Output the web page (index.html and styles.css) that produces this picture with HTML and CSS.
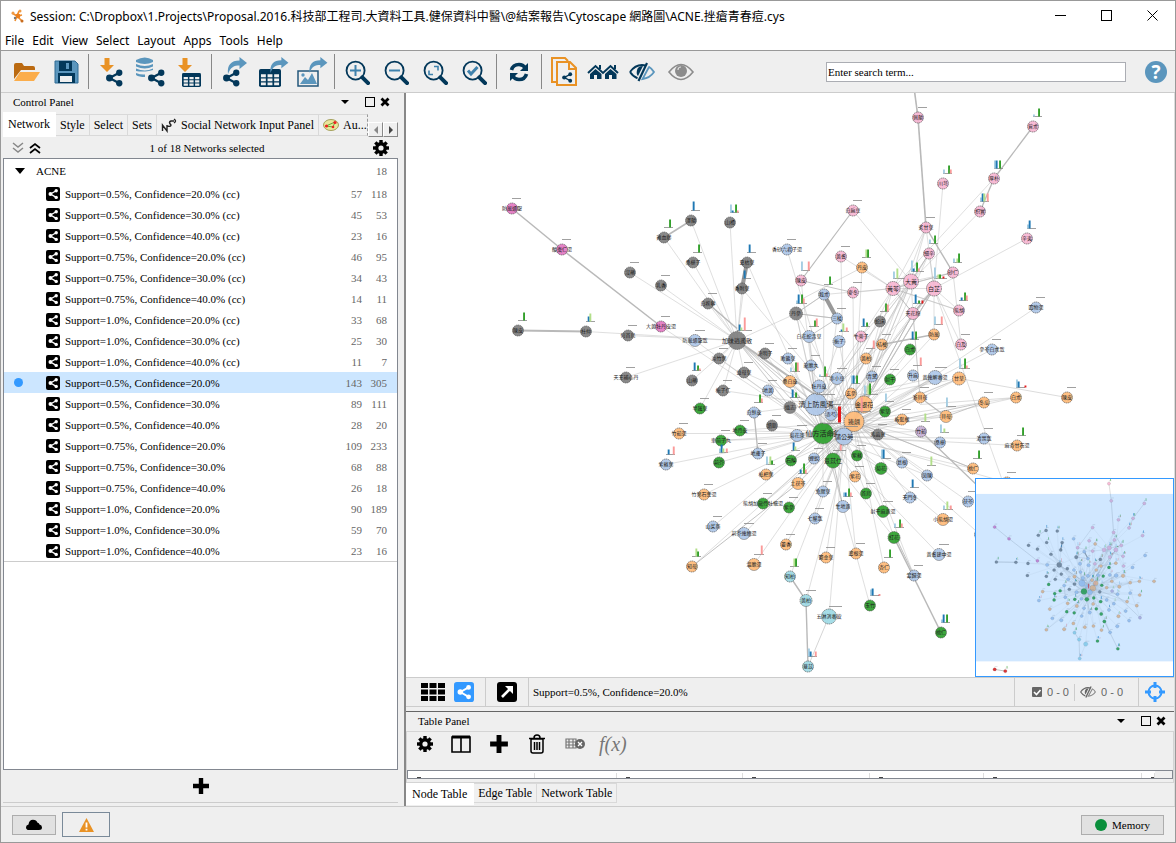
FILE: index.html
```html
<!DOCTYPE html>
<html lang="zh-Hant">
<head>
<meta charset="utf-8">
<title>Session: Cytoscape</title>
<link rel="stylesheet" href="styles.css">
</head>
<body>
<svg class="defs" aria-hidden="true">
  <symbol id="share" viewBox="0 0 24 24"><path d="M19 5 6 12l13 7" fill="none" stroke="currentColor" stroke-width="3"/><circle cx="6" cy="12" r="4.6" fill="currentColor"/><circle cx="19" cy="5" r="4.2" fill="currentColor"/><circle cx="19" cy="19" r="4.2" fill="currentColor"/></symbol>
  <symbol id="netbox" viewBox="0 0 14 14"><rect width="14" height="14" rx="2" fill="currentColor"/><path d="M10.2 3.8 4.5 7l5.7 3.4" fill="none" stroke="#fff" stroke-width="1.3"/><circle cx="4.4" cy="7" r="1.9" fill="#fff"/><circle cx="10.2" cy="3.8" r="1.7" fill="#fff"/><circle cx="10.2" cy="10.4" r="1.7" fill="#fff"/></symbol>
  <symbol id="gear" viewBox="0 0 16 16"><g fill="currentColor"><rect x="6.3" width="3.4" height="16"/><rect x="6.3" width="3.4" height="16" transform="rotate(45 8 8)"/><rect x="6.3" width="3.4" height="16" transform="rotate(90 8 8)"/><rect x="6.3" width="3.4" height="16" transform="rotate(135 8 8)"/></g><circle cx="8" cy="8" r="4.2" fill="none" stroke="currentColor" stroke-width="3.4"/><circle cx="8" cy="8" r="2.6" fill="#efefef"/></symbol>
  <symbol id="plus" viewBox="0 0 18 18"><path d="M6.8 1h4.4v5.8H17v4.4h-5.8V17H6.8v-5.8H1V6.8h5.8z" fill="currentColor"/></symbol>
  <symbol id="lens" viewBox="0 0 26 26"><circle cx="11" cy="11" r="9.4" fill="none" stroke="#03385a" stroke-width="1.9"/><path d="m18 18 6 6" stroke="#03385a" stroke-width="4.2" stroke-linecap="round"/></symbol>
  <symbol id="grid" viewBox="0 0 18 15" preserveAspectRatio="none"><rect width="18" height="15" rx="1.5" fill="#03385a"/><g fill="#efefef"><path d="M1.6 4.4h4v2.4h-4zM7 4.4h4v2.4H7zM12.4 4.4h4v2.4h-4zM1.6 7.9h4v2.3h-4zM7 7.9h4v2.3H7zM12.4 7.9h4v2.3h-4zM1.6 11.3h4v2.3h-4zM7 11.3h4v2.3H7zM12.4 11.3h4v2.3h-4z"/></g></symbol>
  <symbol id="out" viewBox="0 0 20 17"><path d="M1 17C0 8 4 3.5 12.5 3.5V0L20 6l-7.500 6V8.500C7 8.500 3.500 10 1 17z" fill="#5b96bd"/></symbol>
  <symbol id="down" viewBox="0 0 14 14"><path d="M4.500 0h5v7H14l-7 7-7-7h4.500z" fill="#e99225"/></symbol>
  <symbol id="panel-x" viewBox="0 0 10 10"><path d="m1.500 1.500 7 7m0-7-7 7" stroke="#000" stroke-width="2.800"/></symbol>
  <symbol id="panel-max" viewBox="0 0 10 10"><rect x=".5" y=".5" width="9" height="9" fill="none" stroke="#000"/></symbol>
  <symbol id="panel-menu" viewBox="0 0 10 10"><path d="M1 3h8L5 7z" fill="#000"/></symbol>
  <symbol id="eyecut" viewBox="0 0 26 20"><path d="M1 10Q6 3 13 3q2 0 4 .8M1 10q3 4.500 7.500 6.200" fill="none" stroke="currentColor" stroke-width="2"/><path d="M8 8q1-4 6-4L9 14q-2-2-1-6z" fill="currentColor"/><path d="M18 1 9.500 19" stroke="currentColor" stroke-width="2.200"/><path d="M19.500 4.500Q23 6.500 25 10q-4 6-11.500 7L20 5" fill="none" stroke="var(--half,#5b96bd)" stroke-width="1.800"/></symbol>
</svg>

<div class="window">
  <header class="titlebar">
    <svg class="logo" viewBox="0 0 14 14"><path d="m1 4 5 3 2-5M6 7l5-1M6 7l-2 5M6 7l5 5" stroke="#ef8d2c" stroke-width="1.600" fill="none"/><circle cx="7" cy="7" r="2.400" fill="#ea7f1e"/><circle cx="9" cy="2" r="1.500" fill="#ef9a45"/><circle cx="2" cy="4" r="1.500" fill="#ef9a45"/><circle cx="11" cy="12" r="1.500" fill="#c86d1f"/><circle cx="4" cy="9" r="1.200" fill="#777"/></svg>
    <h1>Session: C:\Dropbox\1.Projects\Proposal.2016.科技部工程司.大資料工具.健保資料中醫\@結案報告\Cytoscape 網路圖\ACNE.挫瘡青春痘.cys</h1>
    <div class="winbtns">
      <button aria-label="Minimize"><svg viewBox="0 0 11 11"><path d="M0 5.500h11" stroke="#000"/></svg></button>
      <button aria-label="Maximize"><svg viewBox="0 0 11 11"><rect x=".5" y=".5" width="10" height="10" fill="none" stroke="#000"/></svg></button>
      <button aria-label="Close window"><svg viewBox="0 0 11 11"><path d="m.5.5 10 10m0-10-10 10" stroke="#000"/></svg></button>
    </div>
  </header>
  <nav class="menubar"><button>File</button><button>Edit</button><button>View</button><button>Select</button><button>Layout</button><button>Apps</button><button>Tools</button><button>Help</button></nav>

  <div class="toolbar">
    <button aria-label="Open session"><svg viewBox="0 0 32 32"><path d="M3 23V9q0-2 2-2h6l2 3h9q2 0 2 2v2H10z" fill="#bb6a11"/><path d="m3 25 6-9h20l-6 9z" fill="#fbad4b" /></svg></button>
    <button aria-label="Save session"><svg viewBox="0 0 32 32"><path d="M5 5h20l3 3v19H5z" fill="#5b96bd" stroke="#2f6b94"/><path d="M9 5h13v10H9z" fill="#03385a"/><path d="M16 7h3v6h-3z" fill="#5b96bd"/><path d="M8 17h17v10H8z" fill="#03385a"/><path d="M10 20h12v6H10z" fill="#efefef"/></svg></button>
    <i class="sep"></i>
    <button aria-label="Import network from file"><svg viewBox="0 0 32 32"><use href="#down" x="5" y="2" width="14" height="14"/><g color="#03385a"><use href="#share" x="9" y="13" width="20" height="18"/></g></svg></button>
    <button aria-label="Import network from database"><svg viewBox="0 0 32 32"><g fill="#5b96bd"><path d="M2 4q9-5 17 0v2q-8 4-17 0zM2 8q9 4 17 0v2.500q-8 4-17 0zM2 12.500q9 4 17 0V14l-4 1q-7 1-13 0zM2 17q5 2 9 1.500V21q-6 0-9-2z"/></g><g color="#03385a"><use href="#share" x="12" y="13" width="20" height="18"/></g></svg></button>
    <button aria-label="Import table"><svg viewBox="0 0 32 32"><use href="#down" x="5" y="2" width="14" height="14"/><use href="#grid" x="9" y="17" width="19" height="14"/></svg></button>
    <i class="sep"></i>
    <button aria-label="Export network"><svg viewBox="0 0 32 32"><use href="#out" x="9" y="1" width="20" height="17"/><g color="#03385a"><use href="#share" x="3" y="13" width="20" height="18"/></g></svg></button>
    <button aria-label="Export table"><svg viewBox="0 0 32 32"><use href="#grid" x="2" y="13" width="22" height="18"/><use href="#out" x="12" y="1" width="20" height="16"/></svg></button>
    <button aria-label="Export image"><svg viewBox="0 0 32 32"><path d="M2 15h20v15H2z" fill="none" stroke="#24587c" stroke-width="1.500"/><path d="m4 28 5-7 3 3 4-7 5 11z" fill="#5b96bd"/><circle cx="7" cy="19" r="1.700" fill="#5b96bd"/><use href="#out" x="12" y="1" width="20" height="16"/></svg></button>
    <i class="sep"></i>
    <button aria-label="Zoom in"><svg viewBox="0 0 32 32"><use href="#lens" x="4" y="4" width="25" height="25"/><path d="M9 14.500h11M14.500 9v11" stroke="#3f82ad" stroke-width="2"/></svg></button>
    <button aria-label="Zoom out"><svg viewBox="0 0 32 32"><use href="#lens" x="4" y="4" width="25" height="25"/><path d="M9 14.500h11" stroke="#3f82ad" stroke-width="2"/></svg></button>
    <button aria-label="Fit content"><svg viewBox="0 0 32 32"><use href="#lens" x="4" y="4" width="25" height="25"/><path d="M15 10.500h4v4m-5 4h-4v-4" fill="none" stroke="#3f82ad" stroke-width="1.600"/></svg></button>
    <button aria-label="Zoom selected"><svg viewBox="0 0 32 32"><use href="#lens" x="4" y="4" width="25" height="25"/><path d="m10 14.500 3 3.500 6.500-7" fill="none" stroke="#3f82ad" stroke-width="3"/></svg></button>
    <i class="sep"></i>
    <button aria-label="Apply layout"><svg viewBox="0 0 32 32"><path d="M8.500 14q1.500-5.500 7.500-5.500 4 0 6.500 3.500M23.500 18q-1.500 5.500-7.500 5.500-4 0-6.500-3.500" fill="none" stroke="#03385a" stroke-width="3.600"/><path d="M25 7v8h-8zM7 25v-8h8z" fill="#03385a"/></svg></button>
    <i class="sep"></i>
    <button aria-label="New network from selection"><svg viewBox="0 0 32 32"><path d="M9 26H4V2h13l3 3" fill="none" stroke="#e99225" stroke-width="2"/><path d="M9 6h13l6 6v17H9z" fill="#efefef" stroke="#e99225" stroke-width="2"/><path d="M21 6v7h7" fill="none" stroke="#e99225" stroke-width="2"/><g color="#03385a"><use href="#share" x="13" y="16" width="12" height="11"/></g></svg></button>
    <button aria-label="First neighbors"><svg viewBox="0 0 32 32"><g fill="none" stroke="#03385a" stroke-width="2"><path d="m1 17 7.500-7 7.500 7 7.500-7 7.500 7"/></g><path d="m8.500 13 6 5v5H10v-4H7v4H3v-5zM23.500 13l6 5v5H25v-4h-3v4h-4v-5zM12 9h2v4h-2zM27 9h2v4h-2z" fill="#03385a"/></svg></button>
    <button aria-label="Hide selected" class="navy"><svg viewBox="0 0 32 32"><use href="#eyecut" x="3" y="6" width="26" height="20"/></svg></button>
    <button aria-label="Show all"><svg viewBox="0 0 32 32"><path d="M4 16q12-15 24 0-12 15-24 0z" fill="none" stroke="#8c8c8c" stroke-width="1.600"/><circle cx="16" cy="15" r="6" fill="#8c8c8c"/><path d="M13 14q0-3 3-3" fill="none" stroke="#ddd" stroke-width="1.200"/></svg></button>
    <input class="search" type="text" aria-label="Search" placeholder="Enter search term...">
    <button class="help" aria-label="Help">?</button>
  </div>

  <main>
    <aside>
      <div class="panelhead"><h2>Control Panel</h2><button class="pm" aria-label="Panel menu"><svg><use href="#panel-menu"/></svg></button><button aria-label="Float panel"><svg><use href="#panel-max"/></svg></button><button aria-label="Close panel"><svg><use href="#panel-x"/></svg></button></div>
      <div class="tabs">
        <button class="on">Network</button><button>Style</button><button>Select</button><button>Sets</button>
        <button class="wide"><svg viewBox="0 0 16 16"><path d="M1.500 14V8L6 14V8M6 9q4 1 4-1-3-3 0-4h3M13 2q3 2 0 4" fill="none" stroke="#222" stroke-width="1.400"/></svg>Social Network Input Panel</button>
        <button class="last"><svg viewBox="0 0 16 16"><ellipse cx="8" cy="8" rx="7.500" ry="5.500" fill="#e9e69b" stroke="#a4a05c"/><path d="m3 9 9-4-2 5z" fill="none" stroke="#6a3"/><circle cx="3.500" cy="9" r="1.600" fill="#e22"/><circle cx="12" cy="5.500" r="1.600" fill="#e22"/><circle cx="10" cy="10" r="1.300" fill="#e22"/></svg>Au...</button>
        <span class="scroll"><button aria-label="Previous tabs"><svg viewBox="0 0 8 8"><path d="M6 0v8L2 4z" fill="#888"/></svg></button><button aria-label="Next tabs"><svg viewBox="0 0 8 8"><path d="M2 0v8l4-4z" fill="#444"/></svg></button></span>
      </div>
      <div class="selinfo">
        <button aria-label="Expand all"><svg viewBox="0 0 12 12"><path d="m1 1 5 4 5-4M1 6l5 4 5-4" fill="none" stroke="#888" stroke-width="1.500"/></svg></button>
        <button aria-label="Collapse all"><svg viewBox="0 0 12 12"><path d="m1 6 5-4 5 4M1 11l5-4 5 4" fill="none" stroke="#000" stroke-width="1.700"/></svg></button>
        <span>1 of 18 Networks selected</span>
        <button aria-label="Options"><svg class="g16"><use href="#gear"/></svg></button>
      </div>
      <div class="treebox"><table class="tree"><colgroup><col class="c1"><col class="c2"><col><col class="c4"><col class="c5"></colgroup><tbody id="tree"><tr class="root"><td><svg viewBox="0 0 10 10"><path d="M0 2h10L5 8z"/></svg></td><td colspan="2">ACNE</td><td class="num" colspan="2">18</td></tr></tbody></table></div>
      <div class="addbar"><button aria-label="Create network"><svg class="g18"><use href="#plus"/></svg></button></div>
    </aside>

    <section class="right">
      <div class="canvas">
        <svg id="graph" viewBox="407 94 768 583" preserveAspectRatio="xMidYMid meet"></svg>
        <svg id="mini" viewBox="448 42 686 686"></svg>
      </div>
      <div class="netbar">
        <div class="views"><button aria-label="Grid view"><svg class="v24" viewBox="0 0 24 18"><path d="M0 0h7v5H0zM8.500 0h7v5h-7zM17 0h7v5h-7zM0 6.500h7v5H0zM8.500 6.500h7v5h-7zM17 6.500h7v5h-7zM0 13h7v5H0zM8.500 13h7v5h-7zM17 13h7v5h-7z"/></svg></button><button aria-label="Network view" class="blue"><svg class="v20"><use href="#netbox"/></svg></button></div>
        <div class="detach"><button aria-label="Detach view"><svg class="v20" viewBox="0 0 20 20"><rect width="20" height="20" rx="3"/><path d="m5 15 8-8" stroke="#fff" stroke-width="2.600"/><path d="M8 4h8v8z" fill="#fff"/></svg></button></div>
        <div class="name">Support=0.5%, Confidence=20.0%</div>
        <div class="counts"><svg class="chk" viewBox="0 0 10 10"><rect width="10" height="10" rx="1" fill="#666"/><path d="m2 5 2.500 2.500L8.500 3" fill="none" stroke="#fff" stroke-width="1.600"/></svg><span>0 - 0</span><i></i><svg class="hid"><use href="#eyecut"/></svg><span>0 - 0</span></div>
        <div class="nav"><button aria-label="Navigator"><svg class="v20" viewBox="0 0 20 20"><circle cx="10" cy="10" r="6.500" fill="none" stroke="#39f" stroke-width="2"/><path d="M10 0v6M10 14v6M0 10h6M14 10h6" stroke="#39f" stroke-width="3"/></svg></button></div>
      </div>
      <div class="tablepanel">
        <div class="panelhead"><h2>Table Panel</h2><button class="pm" aria-label="Table panel menu"><svg><use href="#panel-menu"/></svg></button><button aria-label="Float table panel"><svg><use href="#panel-max"/></svg></button><button aria-label="Close table panel"><svg><use href="#panel-x"/></svg></button></div>
        <div class="tablebody">
          <div class="ttools">
            <button aria-label="Table options"><svg class="g16"><use href="#gear"/></svg></button>
            <button aria-label="Show columns"><svg class="v20" viewBox="0 0 20 18"><path d="M1 2h18v15H1zM10 2v15" fill="none" stroke="#000" stroke-width="1.600"/><path d="M1 2h18" stroke="#000" stroke-width="3"/></svg></button>
            <button aria-label="Create column"><svg class="v20"><use href="#plus"/></svg></button>
            <button aria-label="Delete column"><svg class="v20" viewBox="0 0 20 20"><path d="M4 5h12v12q0 2-2 2H6q-2 0-2-2zM2 4.500h16M7 4q0-3 3-3t3 3M7.500 8v8M10 8v8M12.500 8v8" fill="none" stroke="#000" stroke-width="1.500"/></svg></button>
            <button aria-label="Delete table"><svg class="v20" viewBox="0 0 20 16"><path d="M1 3h10v9H1zM1 6h10M1 9h10M4 3v9M8 3v9" fill="none" stroke="#777" stroke-width="1.200"/><circle cx="15" cy="8" r="5" fill="#666"/><path d="m13 6 4 4m0-4-4 4" stroke="#fff" stroke-width="1.300"/></svg></button>
            <button class="fx">f(x)</button>
          </div>
          <div class="cols"><span></span><span class="bare"></span><span></span><span></span><span></span><span></span><span></span><b></b></div>
        </div>
        <div class="tabs btabs"><button class="on">Node Table</button><button>Edge Table</button><button>Network Table</button></div>
      </div>
    </section>
  </main>

  <footer>
    <button class="cloud" aria-label="Cloud status"><svg viewBox="0 0 16 11"><path d="M3 11Q0 11 0 8.200 0 6 2.500 5.500 3 1 7 .8q3.500 0 4.500 3Q13 3.600 13.500 5.500 16 6 16 8.500 16 11 13 11z"/></svg></button>
    <button class="warn" aria-label="Warnings"><svg viewBox="0 0 15 14"><path d="M7.500 0 15 14H0z" fill="#e99225"/><path d="M7.500 4.500v5M7.500 10.800v1.700" stroke="#fff" stroke-width="1.800"/></svg></button>
    <button class="mem"><i></i>Memory</button>
  </footer>
</div>
<script src="app.js"></script>
</body>
</html>
```

FILE: styles.css
```css
* { box-sizing: border-box; }
body { margin: 0; font: 11px "Liberation Serif", "Noto Sans CJK TC", serif; color: #000; }
button { font: inherit; color: inherit; background: none; border: 0; padding: 0; margin: 0; display: flex; align-items: center; justify-content: center; white-space: nowrap; }
svg { display: block; }
.defs { position: absolute; width: 0; height: 0; }
.window { min-height: 100vh; display: grid; grid-template-rows: 29px 21px 42px 1fr 36px; border: 1px solid #999; background: #efefef; }

.titlebar, .menubar { background: #fff; display: flex; align-items: center; font-family: "Noto Sans", "Noto Sans CJK TC", sans-serif; font-size: 12px; }
.titlebar { padding-left: 10px; }
.logo { width: 14px; height: 14px; margin-right: 5px; }
h1 { font-size: 12px; font-weight: 400; margin: 0; flex: 1; white-space: nowrap; overflow: hidden; }
.winbtns { display: flex; }
.winbtns button { width: 46px; height: 29px; }
.winbtns svg { width: 11px; height: 11px; }
.menubar { padding: 1px 4px 0; gap: 8px; border-bottom: 1px solid #999; }

.toolbar { display: flex; align-items: center; padding-left: 6px; padding-right: 8px; border-bottom: 1px solid #ccc; }
.toolbar button { width: 39px; height: 40px; flex: none; }
.toolbar svg { width: 32px; height: 32px; }
.sep { width: 1px; height: 35px; background: #888; margin: 0 2px 0 3px; flex: none; }
.navy { color: #03385a; }
.search { margin-left: auto; width: 300px; height: 20px; border: 1px solid #abadb3; padding: 0 1px; font: inherit; min-width: 0; }
.search::placeholder { color: #000; opacity: 1; }
.toolbar .help { width: 22px; height: 22px; margin-left: 19px; border-radius: 50%; background: #5b96bd; color: #fff; font: bold 19px "Open Sans", sans-serif; }

main { display: grid; grid-template-columns: 403px minmax(0, 1fr); min-height: 0; }
aside { display: flex; flex-direction: column; padding: 0 6px 3px 2px; min-height: 0; }
.panelhead { height: 19px; display: flex; align-items: center; padding: 0 8px 2px 10px; }
.panelhead h2 { font-size: 11px; font-weight: 400; margin: 0; flex: 1; }
.panelhead button { margin-left: 5px; }
.panelhead .pm { margin-right: 10px; }
.panelhead svg { width: 10px; height: 10px; }
.tabs { display: flex; height: 27px; padding-top: 1px; font-size: 12px; }
.tabs > button { height: 22px; padding: 0 4px; border: 1px solid #d9d9d9; border-left: 0; margin-top: 1px; background: #f0f0f0; }
.tabs > .on { background: #fff; height: 25px; margin-top: -1px; padding: 0 5px; border-color: #fff; }
.tabs > button svg { width: 16px; height: 16px; margin-right: 4px; flex: none; }
.tabs > .last { flex: 1; min-width: 0; overflow: hidden; border-right: 1px dashed #999; justify-content: flex-start; }
.scroll { display: flex; align-items: flex-end; padding-bottom: 2px; }
.scroll button { width: 15px; height: 15px; border: 1px solid; border-color: #fff #888 #888 #fff; }
.scroll svg { width: 8px; height: 8px; }
.selinfo { height: 18px; margin-bottom: 1px; display: flex; align-items: center; gap: 5px; padding: 0 9px; }
.selinfo span { flex: 1; text-align: center; }
.selinfo button svg { width: 12px; height: 12px; }
.selinfo button .g16, .g16 { width: 16px; height: 16px; }
.g18 { width: 18px; height: 18px; }
.treebox { flex: 1; background: #fff; border: 1px solid #828790; }
.tree { width: 100%; border-collapse: separate; border-spacing: 0; table-layout: fixed; border-bottom: 1px solid #ccc; }
.tree td { height: 21px; padding: 0; white-space: nowrap; }
.tree .root td { height: 24px; }
.c1 { width: 32px; }
.c2 { width: 29px; }
.c4 { width: 40px; }
.c5 { width: 35px; }
.tree .root svg { width: 10px; height: 10px; margin-left: 11px; }
.tree .ico svg { width: 14px; height: 14px; margin-left: 10px; }
.tree .dot { display: block; width: 9px; height: 9px; border-radius: 50%; background: #39f; margin-left: 10px; }
.tree .num { text-align: right; color: #666; padding-right: 10px; }
.tree .n1 { text-align: right; color: #666; }
.tree .sel { background: #cce6ff; }
.addbar { height: 33px; display: flex; align-items: center; justify-content: center; border-bottom: 1px solid #ccc; }

.right { display: flex; flex-direction: column; min-width: 0; border-left: 2px solid #888; border-right: 1px solid #ddd; }
.canvas { position: relative; flex: 1; background: #fff; min-height: 300px; }
#graph { position: absolute; inset: 0; width: 100%; height: 100%; font-family: "Noto Sans CJK TC", sans-serif; }
#mini { position: absolute; right: 0; bottom: 0; width: 199px; height: 199px; background: #fff; border: 1px solid #39f; }
.netbar { display: flex; height: 30px; border: 1px solid #ccc; border-width: 1px 0; margin-bottom: 4px; }
.netbar > div { display: flex; align-items: center; border-right: 1px solid #ccc; }
.views { padding: 0 11px 0 15px; gap: 9px; }
.v20 { width: 20px; height: 20px; }
.v24 { width: 24px; height: 18px; }
.blue { color: #39f; }
.detach { padding: 0 11px; }
.name { flex: 1; padding-left: 4px; }
.counts { padding: 0 15px 0 17px; gap: 5px; color: #666; font: 11px "Liberation Sans", sans-serif; --half: #888; }
.counts i { width: 1px; height: 17px; background: #ccc; }
.chk { width: 10px; height: 10px; }
.hid { width: 16px; height: 14px; }
.netbar > .nav { padding: 0 9px 0 6px; border: 0; }
.tablepanel { border-top: 1px solid #666; height: 95px; display: flex; flex-direction: column; }
.tablepanel .panelhead { padding-left: 12px; }
.tablebody { border: 1px solid #d4d4d4; height: 52px; display: flex; flex-direction: column; justify-content: space-between; padding-bottom: 3px; }
.ttools { display: flex; align-items: center; height: 24px; padding-left: 10px; gap: 18px; }
.ttools .fx { font: italic 20px "Liberation Serif", serif; color: #777; margin-left: -4px; }
.cols { height: 9px; border: 1px solid #828790; background: #fff; display: grid; grid-template-columns: 127fr 82fr 126fr 126fr 114fr 158fr 13fr 17px; }
.cols span { margin-top: 2px; border-right: 1px solid #ddd; display: flex; align-items: flex-end; padding-left: 9px; overflow: hidden; }
.cols span::before { content: ""; width: 4px; height: 1px; background: #444; }
.cols .bare::before { display: none; }
.cols b { background: #efefef; }
.btabs { height: 23px; padding: 0; }
.btabs > button { height: 20px; margin: 0; padding: 0 4px; }
.btabs > .on { height: 22px; margin: 0; padding: 0 6px; }

footer { border-top: 1px solid #ccc; display: flex; align-items: center; padding: 0 11px; gap: 6px; }
.cloud { width: 44px; height: 20px; background: #e1e1e1; border: 1px solid #adadad; }
.cloud svg { width: 16px; height: 11px; }
.warn { width: 48px; height: 25px; border: 1px solid #7a8a99; }
.warn svg { width: 15px; height: 14px; }
.mem { margin-left: auto; width: 83px; height: 20px; background: #e1e1e1; border: 1px solid #adadad; gap: 5px; }
.mem i { width: 12px; height: 12px; border-radius: 50%; background: #0a8f3c; }
```

FILE: app.js
```js
// Network list: support, confidence, suffix, node count, edge count
const rows = [];
const counts = [[57,118],[45,53],[23,16],[46,95],[34,43],[14,11],[33,68],[25,30],[11,7],[143,305],[89,111],[28,20],[109,233],[68,88],[26,18],[90,189],[59,70],[23,16]];
let k = 0;
for (const cc of [' (cc)', ''])
  for (const s of ['0.5', '0.75', '1.0'])
    for (const c of [20, 30, 40]) {
      const sel = k === 9;
      rows.push(`<tr${sel ? ' class="sel"' : ''}><td>${sel ? '<i class="dot"></i>' : ''}</td><td class="ico"><svg><use href="#netbox"/></svg></td><td>Support=${s}%, Confidence=${c}.0%${cc}</td><td class="n1">${counts[k][0]}</td><td class="num">${counts[k][1]}</td></tr>`);
      k++;
    }
document.getElementById('tree').insertAdjacentHTML('beforeend', rows.join(''));

const fill = { k:'#7f7f7f', b:'#aec7e8', o:'#ffbb78', g:'#2ca02c', p:'#f7b6d2', v:'#c5b0d5', m:'#e377c2', c:'#9edae5', r:'#d62728' };
const hub = { A:[817,405], B:[824,434], C:[855,422], D:[845,437], E:[738,341], F:[935,289], G:[912,282], H:[894,289], I:[797,314], J:[834,461] };
const barFill = ['#a6cee3','#1f78b4','#b2df8a','#33a02c','#fb9a99','#e31a1c'];
// x, y, radius, colour, label, hubs joined to, bars as "slot:height"
const nodes = [
[513,209,5.5,'m','防風通聖',''],[563,250,5.5,'m','酸棗仁湯',''],[662,327,5.5,'m','大黃牡丹皮湯','B'],
[692,221,5.5,'k','澤蘭','E','1:9'],[665,238,5.5,'k','雞血藤','E','3:8'],[731,223,5.5,'k','山楂','E','0:8 1:2 3:8 4:2'],
[694,263,5.5,'k','桑椹子','E','3:8'],[631,273,5.5,'k','沒藥','E'],[662,286,5.5,'k','乳香','E'],
[748,263,5.5,'k','夏枯草','EB','1:8'],[743,289,5.5,'k','香附草','EC','1:8'],[709,304,5.5,'k','白蒺藜','E'],
[519,331,5.5,'k','陳皮','','3:8'],[587,332,5.5,'k','杜仲','E','1:5 2:8'],[629,336,5.5,'k','何首烏','E'],
[738,341,9,'k','加味逍遙散','ABCDJ','1:6 2:3 4:13'],[696,341,6,'b','防風通聖散','B'],[788,250,5.5,'b','香砂六君子湯','D'],[766,354,5.5,'k','決明子','BC'],
[919,118,5.5,'p','佩蘭',''],[1034,127,5.5,'p','蒼朮','','0:2 3:8'],[944,184,5.5,'p','川芎','F','0:4 3:8 4:4'],[995,179,5.5,'p','厚朴','H','0:8 1:8 3:8'],
[981,212,5.5,'p','枳實','G','0:4 1:8 2:8 4:8'],[927,228,5.5,'p','炙甘草','GHFC'],[1028,239,5.5,'p','辛夷','F','0:4 1:8'],
[854,211,5.5,'p','白扁豆','G'],[930,254,5.5,'p','細辛','FGBC','0:4 3:8'],[954,273,5.5,'p','砂仁','HG','0:4 2:4 3:9'],[842,257,5.5,'p','黃耆','HD'],
[863,268,5.5,'o','丹皮','HC','2:8 3:8'],[802,281,5.5,'p','陳皮','A','0:9 4:9'],[854,293,5.5,'p','麥冬','HC'],
[894,289,7,'p','黃芩','GBC','0:7 2:10'],[912,282,7.5,'p','大黃','ABC','0:11 1:3 3:9 4:3'],[935,289,7.5,'p','白芷','HBCD','0:11 2:4 3:4 5:2'],
[825,295,5.5,'b','莪朮','IBH','3:8'],[838,319,5.5,'b','三稜','IB'],[797,314,6.5,'k','丹參','ABCE','0:3 1:9 3:9 4:5'],
[881,322,5.5,'k','蛇床','C','3:8 4:7'],[914,314,6,'p','天花粉','BCGF','1:9 3:3 5:3'],[960,311,5.5,'p','柴胡','HF','1:3 3:8 4:5'],
[1037,308,5.5,'b','四物湯','D'],[935,335,5.5,'o','防風','FC','0:8 4:8'],[810,337,6,'b','白花蛇舌草','BA','3:6 4:8'],[840,342,6,'b','梔子','AC','1:2 2:8 4:4'],
[862,337,5.5,'p','牛蒡子','BCG','1:8 3:4'],[883,345,5.5,'o','桔梗','AC'],[911,350,5.5,'g','白朮','BC','1:8 3:8'],[962,345,5.5,'p','白及','F'],[993,350,5.5,'b','參苓白朮散','C'],
[720,359,5.5,'k','淡竹葉','BE'],[745,373,5.5,'k','益母草','AE'],[627,378,5.5,'k','天王補心丹','E'],[693,381,5.5,'k','山藥','E','1:8 3:5 4:2'],[724,391,5.5,'k','梔子仁','AE'],
[769,391,5.5,'b','地黃','B'],[789,359,5.5,'b','敗醬草','B'],[812,366,5.5,'b','龍膽丸','A'],[791,382,6,'o','桑白皮','AB','0:4 3:9 4:9'],[820,387,6.5,'b','牡丹皮','BC','0:2 3:10 4:3'],
[838,379,6,'b','赤小豆','BC'],[817,405,11,'b','清上防風湯','BCDEFGH'],[791,408,6,'k','遠志','BE','1:8 3:5'],[701,409,5.5,'g','旱蓮草','E'],[755,413,5.5,'b','白鮮皮','A','3:8 4:4'],[773,426,5.5,'k','續斷','B'],
[832,415,6,'b','赤芍','DBC'],[680,434,5.5,'o','竹茹湯','B'],[741,431,5.5,'g','地骨皮','BC'],[722,441,5.5,'g','車前子丸','BD'],[824,434,10.5,'g','仙方活命飲','CDEFG'],
[798,436,6,'b','菊花茶','BD'],[667,465,5.5,'b','紫蘇葉','B','1:5 4:8'],[720,463,5.5,'g','荊芥','B','0:4 1:8 2:4 4:4'],[759,454,5.5,'b','地膚子','B'],
[792,461,5.5,'g','石斛','BD','1:8 2:4'],[815,459,5.5,'b','蟬蛻','BC'],[834,461,7.5,'g','薏苡仁','BCDA','4:6'],[767,475,5.5,'o','枇杷葉','C','0:8 2:8 3:4'],
[799,484,6,'o','土茯苓','CD','1:4 3:10 4:4'],[824,492,5.5,'b','魚腥草','BC'],[705,495,5.5,'o','竹葉石膏湯','C'],[764,504,5.5,'g','柴胡加龍骨牡蠣湯','CD'],[790,508,5.5,'g','紫參','C'],
[714,527,5.5,'b','山茱萸','B'],[816,519,5.5,'b','七釐散','D'],[745,534,6,'b','荊芥連翹湯','C'],[787,545,5.5,'o','藿香','D'],[827,558,5.5,'o','鬱金草','D'],[693,567,5.5,'o','知母','C','2:8 3:5'],
[755,565,6,'o','溫膽湯','C','4:9'],[791,577,5.5,'c','知柏','D','2:8 3:8'],[867,359,5.5,'o','黃柏','BA','4:8'],[873,377,5.5,'b','青黛','BC'],[891,380,5.5,'g','射干','BC'],[914,376,5.5,'b','升麻','D','4:8'],
[936,378,7,'b','黃連解毒湯','BCDA'],[960,379,6.5,'o','甘草','ABCD','0:10 3:10 4:3'],[1017,398,5.5,'o','白朮','CD','0:8 1:6 5:2'],[1068,398,5.5,'o','陳皮',''],[852,394,5.5,'o','玄參','BA','0:8 1:8 3:8'],
[865,405,8.5,'o','金銀花','BACDF','0:9 2:9 3:11'],[855,422,10,'o','連翹','BDEFGJ','4:14'],[845,437,8.5,'b','蒲公英','BCE'],[886,412,5.5,'g','紫草','B','0:8'],[903,420,5.5,'o','板藍根','BD'],
[921,398,5.5,'o','浙貝母','CD'],[947,417,6,'o','貝母','CB','0:9'],[985,403,5.5,'o','冬瓜',''],[922,432,5.5,'v','竹茹','BC','2:8'],[941,443,5.5,'b','桑椹','CD','0:8 2:4'],[985,439,5.5,'b','清胃散','D'],
[1018,446,5.5,'o','麻杏甘石湯','D','3:8'],[879,435,5.5,'k','馬齒莧','C'],[858,456,5.5,'g','紫蘇','C'],[882,469,6,'g','菊花','B','0:9 1:9'],[903,463,5.5,'b','葛根','C'],[856,477,5.5,'o','紫花','B'],
[867,494,5.5,'g','首烏','D'],[928,476,5.5,'b','茵陳','BC','2:9'],[974,469,5.5,'o','桃仁','BC','3:8'],[911,498,5.5,'b','天門冬','C','1:8'],[844,507,6,'b','生地黃','B','0:4 1:4 3:8 4:4'],
[884,512,6,'g','射干麻黃湯','D'],[944,520,6,'o','小柴胡湯','D','0:4 2:8 4:4'],[969,502,5.5,'b','茯苓','C'],[895,538,6,'g','紅花','JC','0:4 3:8 4:4'],[940,555,6,'b','黃耆建中湯','B'],
[857,554,5.5,'o','蘆根湯','D'],[885,568,5.5,'o','杏仁','C','3:8'],[915,576,5.5,'b','當歸湯','C'],[871,606,5.5,'g','玉竹','B','0:6 1:7 5:1'],[942,633,5.5,'g','桃仁','','0:3 1:8 3:8'],
[807,601,6,'c','黃柏','C'],[830,617,7.5,'c','五淋消毒飲','D'],[809,667,5.5,'c','薏苡','','0:8 1:5 4:5'],
[1019,525,5.5,'v','','F'],[1008,483,5.5,'o','','D'],[981,535,5.5,'b','','C'],[911,58,5.5,'p','','','3:8'],[513,705,6,'r','',''],[550,711,6,'r','','','3:8']
];
// x1, y1, x2, y2, width
const extra = [
[513,209,563,250,1.5],[563,250,662,327,1.5],[692,221,665,238,1.5],[519,331,587,332,2.2],[748,263,743,289,4],[709,304,738,329,1.5],[738,341,855,422,2],
[911,58,919,118,1.6],[919,118,927,228,1.6],[1034,127,995,179,1.3],[995,179,981,212,1.3],[854,211,802,281,1.1],[927,228,954,273,1.4],[825,295,838,319,4],
[825,295,797,314,.8],[838,319,810,337,.8],[802,281,854,293,.8],[930,254,912,282,.8],[954,273,894,289,.8],[883,345,935,335,1.3],[935,289,914,314,1.5],[914,314,855,422,1],
[914,314,921,398,.8],[921,398,947,417,1.1],[1068,398,960,379,.5],[985,403,947,417,.8],[985,403,903,420,.8],[1017,398,921,405,.5],[922,432,1019,525,1.3],[855,422,974,469,.9],[755,413,759,454,1.3],
[791,577,807,601,1.4],[807,601,809,667,1.4],[830,617,809,667,.6],[895,538,942,633,1.5],[897,538,915,576,.9],[834,461,844,507,.9],[693,567,799,484,.9],[954,273,962,345,.5],[894,289,960,311,.5],
[513,705,550,711,3],[797,314,838,319,.9],[894,289,914,314,1],[863,268,802,300,.5]
];
const line = (x1, y1, x2, y2, w, o = 1) => `<path d="M${x1} ${y1}L${x2} ${y2}" stroke="${w > 3 ? '#999' : '#b9b9b9'}" stroke-width="${w}" opacity="${o}"/>`;
let edges = '';
for (const [x, y, , , , hs] of nodes) for (const h of hs) edges += line(x, y, hub[h][0], hub[h][1], .6, .75);
for (const e of extra) edges += line(...e);
const drawNodes = labels => nodes.map(([x, y, r, c, t, , bars]) => {
  let s = `<circle cx="${x}" cy="${y}" r="${r}" fill="${fill[c]}" fill-opacity=".92" stroke="#444" stroke-width=".6" stroke-dasharray="1.500 .6"/>`;
  const size = r > 10 ? 7 : r > 6.5 && t.length < 4 || r > 8 ? 6 : 5;
  if (labels && t) s += `<text x="${x}" y="${y + size * .36}" font-size="${size}" text-anchor="middle" fill="#222">${t}</text>`;
  s += `<path d="M${x} ${y - 10}h${Math.round(r * 1.7)}" stroke="#888" stroke-width=".8"/>`;
  if (bars) for (const b of bars.split(' ')) {
    const [i, h] = b.split(':').map(Number);
    s += `<rect x="${x + i * 1.7}" y="${y - 10 - h}" width="1.900" height="${h}" fill="${barFill[i]}"/>`;
  }
  return s;
}).join('') + '<rect x="839" y="407" width="3" height="16" fill="#e31a1c"/>';
document.getElementById('graph').innerHTML = edges + drawNodes(true);
document.getElementById('mini').innerHTML = edges + drawNodes(false) + '<rect x="440" y="94" width="700" height="583" fill="#39f" fill-opacity=".23"/>';
```
